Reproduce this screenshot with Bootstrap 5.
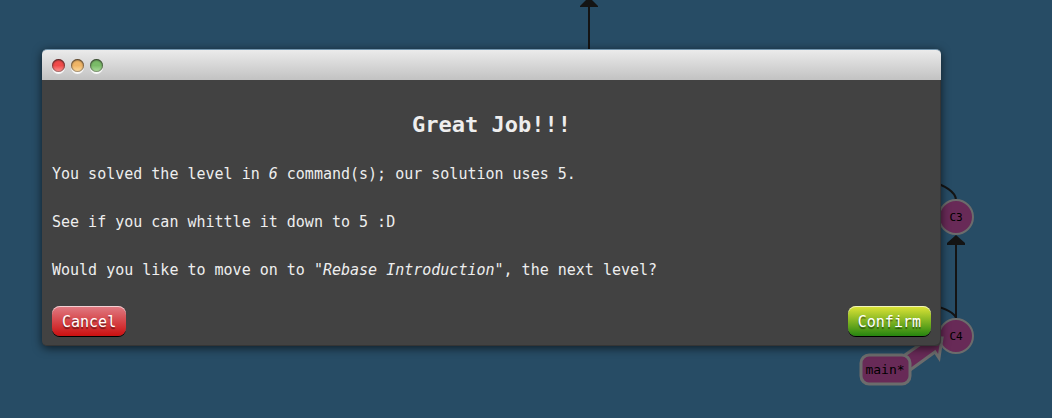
<!DOCTYPE html>
<html lang="en">
<head>
<meta charset="utf-8">
<meta name="viewport" content="width=device-width, initial-scale=1">
<title>Great Job!!!</title>
<link href="https://cdn.jsdelivr.net/npm/bootstrap@5.3.0/dist/css/bootstrap.min.css" rel="stylesheet">
<style>
  body { background: #274c65; font-family: "DejaVu Sans Mono", monospace; font-size: 15px; line-height: 24px; color: #eee; }
  .stage { padding: 49px 111px 71px 42px; }
  .tree { z-index: 0; }
  .tree text { font-family: "DejaVu Sans Mono", monospace; fill: #000; text-anchor: middle; }
  .term { z-index: 1; background: #424242; border-radius: 5px; box-shadow: 0 2px 10px rgba(0,0,0,.65), inset -1px -1px 0 #353535; }
  .titlebar { height: 31px; padding-left: 10px; gap: 6px; background: linear-gradient(#ebebeb, #c2c2c2); border-top: 1px solid #7295ae; border-radius: 5px 5px 0 0; }
  .dot { width: 13px; height: 13px; border-radius: 50%; box-shadow: inset 0 1px 2px rgba(0,0,0,.6), inset 0 0 1px 1px rgba(90,80,80,.5), 0 2px 0 #f8f8f8; }
  .dot-red { background: linear-gradient(#f04a4a 50%, #ff9a96); }
  .dot-amber { background: linear-gradient(#efb566 50%, #ffe0a5); }
  .dot-green { background: linear-gradient(#7abb68 50%, #b2e0a2); }
  .term-body { padding: 33px 10px 10px; }
  .term h2 { font-size: 22px; line-height: 24px; font-weight: 700; margin-bottom: 25px; }
  .term p { margin-bottom: 24px; }
  .term .btn { padding: 4px 10px 2px; border: 0; border-radius: 8px; color: #fff; font-size: 15px; line-height: 24px; text-shadow: 0 2px 1px rgba(0,0,0,.45); box-shadow: inset 0 1px 0 rgba(255,255,255,.65), 0 1px 0 #000; }
  .term .btn-cancel { background: linear-gradient(#e07c84, #cc1010); }
  .term .btn-confirm { background: linear-gradient(#dfe536, #268510); }
</style>
</head>
<body>
<main class="stage position-relative overflow-hidden">
  <svg class="tree position-absolute top-0 start-0 w-100 h-100" aria-label="Commit tree">
    <g fill="none" stroke="#141414" stroke-width="2">
      <path d="M589 50V5"/>
      <path d="M956 200C956 192 944 185 932 182"/>
      <path d="M956 320V242"/>
      <path d="M956 318C954 312 944 308 932 305"/>
    </g>
    <path d="M580 7V6L589-3L598 6V7Z" fill="#141414"/>
    <path d="M947 245V243L956 235L965 243V245Z" fill="#141414"/>
    <g fill="#682a57" stroke="#6c6c6c" stroke-width="2">
      <circle cx="956" cy="217" r="17"/>
      <circle cx="956" cy="336" r="17"/>
      <path d="M902 357L925 341L918 337L942 338L939 358L935 352L906 373Z" stroke-width="3"/>
      <rect x="861" y="355" width="49" height="29" rx="8" stroke-width="3"/>
    </g>
    <text x="956" y="221" font-size="11">C3</text>
    <text x="956" y="340" font-size="11">C4</text>
    <text x="885" y="374" font-size="13">main*</text>
  </svg>
  <section class="term position-relative" role="dialog" aria-labelledby="dialog-title">
    <div class="titlebar d-flex align-items-center">
      <span class="dot dot-red"></span>
      <span class="dot dot-amber"></span>
      <span class="dot dot-green"></span>
    </div>
    <div class="term-body">
      <h2 class="text-center" id="dialog-title">Great Job!!!</h2>
      <p>You solved the level in <em>6</em> command(s); our solution uses 5.</p>
      <p>See if you can whittle it down to 5 :D</p>
      <p>Would you like to move on to <em>"Rebase Introduction"</em>, the next level?</p>
      <div class="d-flex justify-content-between">
        <button type="button" class="btn btn-cancel">Cancel</button>
        <button type="button" class="btn btn-confirm">Confirm</button>
      </div>
    </div>
  </section>
</main>
<script src="https://cdn.jsdelivr.net/npm/bootstrap@5.3.0/dist/js/bootstrap.bundle.min.js"></script>
</body>
</html>
